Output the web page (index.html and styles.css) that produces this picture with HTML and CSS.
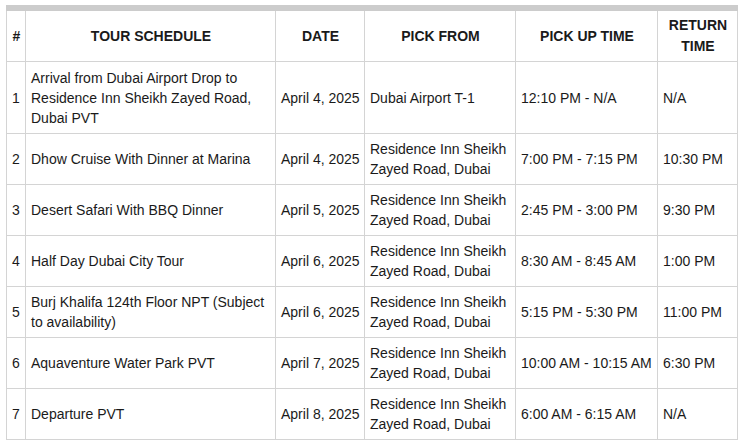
FILE: index.html
```html
<!DOCTYPE html>
<html>
<head>
<meta charset="utf-8">
<link rel="stylesheet" href="styles.css">
</head>
<body>
<div class="wrap">
<table class="schedule">
<colgroup>
<col class="c-num"><col class="c-tour"><col class="c-date"><col class="c-from"><col class="c-pick"><col class="c-ret">
</colgroup>
<thead>
<tr><th>#</th><th>TOUR SCHEDULE</th><th>DATE</th><th>PICK FROM</th><th>PICK UP TIME</th><th>RETURN TIME</th></tr>
</thead>
<tbody>
<tr class="tall"><td>1</td><td>Arrival from Dubai Airport Drop to Residence Inn Sheikh Zayed Road, Dubai PVT</td><td>April 4, 2025</td><td>Dubai Airport T-1</td><td>12:10 PM - N/A</td><td>N/A</td></tr>
<tr><td>2</td><td>Dhow Cruise With Dinner at Marina</td><td>April 4, 2025</td><td>Residence Inn Sheikh Zayed Road, Dubai</td><td>7:00 PM - 7:15 PM</td><td>10:30 PM</td></tr>
<tr><td>3</td><td>Desert Safari With BBQ Dinner</td><td>April 5, 2025</td><td>Residence Inn Sheikh Zayed Road, Dubai</td><td>2:45 PM - 3:00 PM</td><td>9:30 PM</td></tr>
<tr><td>4</td><td>Half Day Dubai City Tour</td><td>April 6, 2025</td><td>Residence Inn Sheikh Zayed Road, Dubai</td><td>8:30 AM - 8:45 AM</td><td>1:00 PM</td></tr>
<tr><td>5</td><td>Burj Khalifa 124th Floor NPT (Subject to availability)</td><td>April 6, 2025</td><td>Residence Inn Sheikh Zayed Road, Dubai</td><td>5:15 PM - 5:30 PM</td><td>11:00 PM</td></tr>
<tr><td>6</td><td>Aquaventure Water Park PVT</td><td>April 7, 2025</td><td>Residence Inn Sheikh Zayed Road, Dubai</td><td>10:00 AM - 10:15 AM</td><td>6:30 PM</td></tr>
<tr><td>7</td><td>Departure PVT</td><td>April 8, 2025</td><td>Residence Inn Sheikh Zayed Road, Dubai</td><td>6:00 AM - 6:15 AM</td><td>N/A</td></tr>
</tbody>
</table>
</div>
</body>
</html>
```
FILE: styles.css
```css
html, body {
  margin: 0;
  padding: 0;
  background: #fff;
}
.wrap {
  padding: 5px 0 0 6px;
}
.schedule {
  width: 731px;
  border-collapse: collapse;
  table-layout: fixed;
  font-family: "Liberation Sans", Arial, sans-serif;
  font-size: 14px;
  line-height: 20px;
  color: #1a1a1a;
  border-top: 6px solid #cccccc;
}
.c-num { width: 19px; }
.c-tour { width: 250px; }
.c-date { width: 89px; }
.c-from { width: 151px; }
.c-pick { width: 142px; }
.c-ret { width: 80px; }
.schedule th,
.schedule td {
  border: 1px solid #d4d4d4;
  padding: 5px 4px 5px 5px;
  vertical-align: middle;
}
.schedule th {
  font-weight: bold;
  text-align: center;
  height: 42px;
  line-height: 21px;
  padding-top: 4px;
  padding-bottom: 4px;
}
.schedule td {
  text-align: left;
  height: 40px;
}
.schedule tr.tall td {
  height: 61px;
}
```
